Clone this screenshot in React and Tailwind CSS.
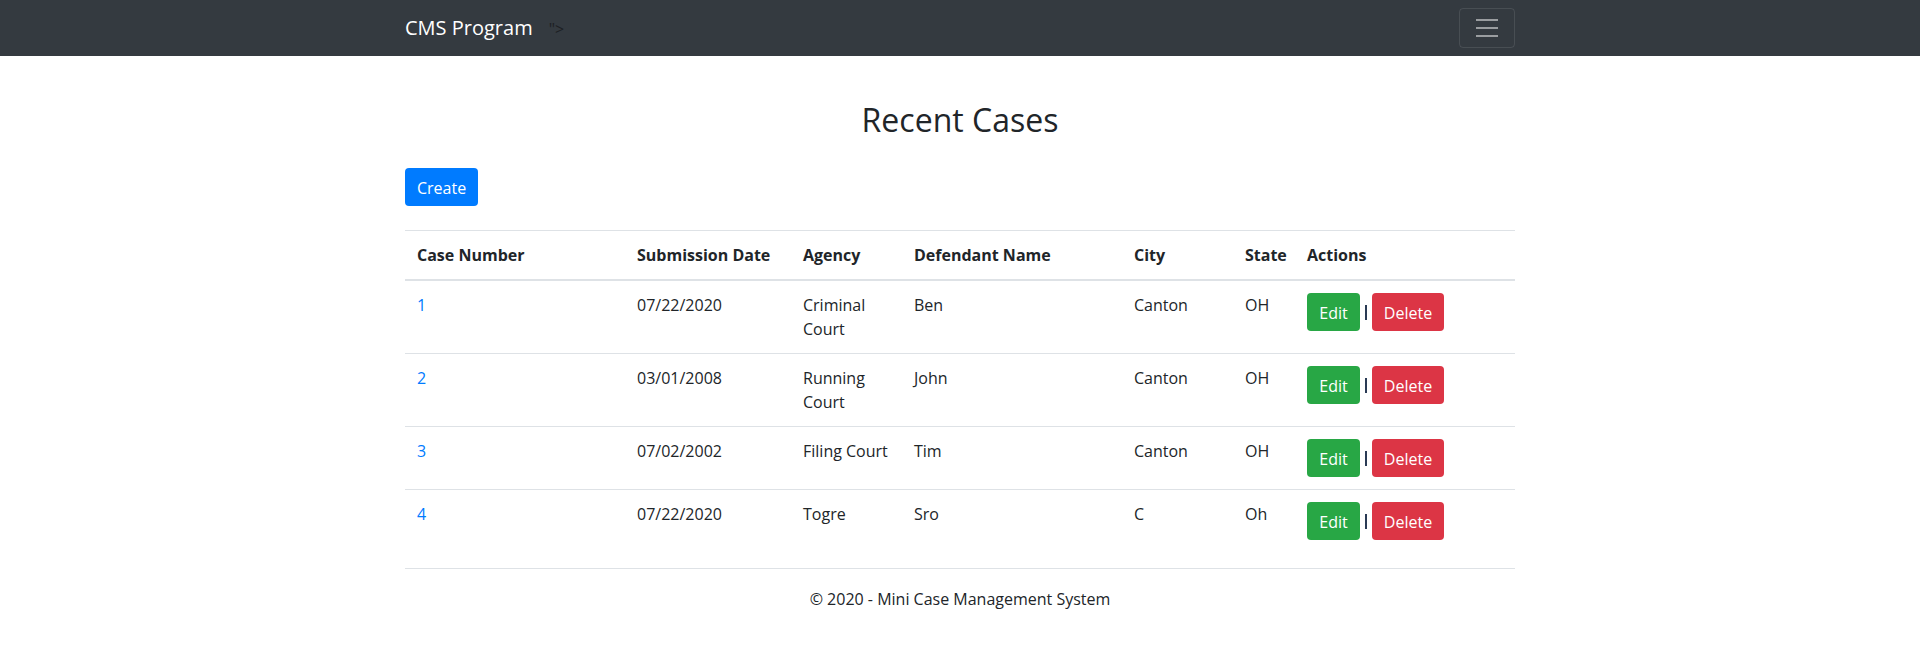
import React from "react";

const rows = [
  { id: "1", date: "07/22/2020", agency: "Criminal Court", name: "Ben", city: "Canton", state: "OH" },
  { id: "2", date: "03/01/2008", agency: "Running Court", name: "John", city: "Canton", state: "OH" },
  { id: "3", date: "07/02/2002", agency: "Filing Court", name: "Tim", city: "Canton", state: "OH", nowrap: true },
  { id: "4", date: "07/22/2020", agency: "Togre", name: "Sro", city: "C", state: "Oh" },
];

export default function App() {
  return (
    <div className="min-h-screen bg-white text-[#212529] text-base leading-6 font-['Open_Sans','Noto_Sans',sans-serif]">
      <nav className="h-14 bg-[#343a40]">
        <div className="mx-auto flex h-full w-[1140px] items-center justify-between px-[15px]">
          <div className="flex items-baseline">
            <a href="#" className="mr-4 text-xl leading-[30px] text-white">CMS Program</a>
            <span className="text-base text-[#1d2024]">"&gt;</span>
          </div>
          <button className="flex h-[40px] w-[56px] items-center justify-center rounded border border-white/10">
            <svg width="30" height="30" viewBox="0 0 30 30">
              <path d="M4 7h22M4 15h22M4 23h22" stroke="rgba(255,255,255,0.5)" strokeWidth="2" strokeLinecap="butt" />
            </svg>
          </button>
        </div>
      </nav>

      <main className="mx-auto w-[1140px] px-[15px]">
        <h2 className="mt-[45px] text-center text-[32px] font-normal leading-[1.2]">Recent Cases</h2>
        <div className="mt-[29px]">
          <a href="#" className="inline-flex h-[38px] items-center rounded bg-[#007bff] px-3 pt-px text-white">Create</a>
        </div>

        <table className="mt-[24px] mb-4 w-full table-fixed border-collapse">
          <colgroup>
            <col className="w-[220px]" />
            <col className="w-[166px]" />
            <col className="w-[111px]" />
            <col className="w-[220px]" />
            <col className="w-[111px]" />
            <col className="w-[62px]" />
            <col className="w-[220px]" />
          </colgroup>
          <thead>
            <tr>
              {["Case Number", "Submission Date", "Agency", "Defendant Name", "City", "State", "Actions"].map((h) => (
                <th key={h} className="border-t border-b-2 border-[#dee2e6] p-3 text-left align-bottom font-bold whitespace-nowrap">
                  {h}
                </th>
              ))}
            </tr>
          </thead>
          <tbody>
            {rows.map((r) => (
              <tr key={r.id}>
                <td className="border-t border-[#dee2e6] p-3 align-top">
                  <a href="#" className="text-[#007bff]">{r.id}</a>
                </td>
                <td className="border-t border-[#dee2e6] p-3 align-top">{r.date}</td>
                <td className={`border-t border-[#dee2e6] p-3 align-top ${r.nowrap ? "whitespace-nowrap" : ""}`}>{r.agency}</td>
                <td className="border-t border-[#dee2e6] p-3 align-top">{r.name}</td>
                <td className="border-t border-[#dee2e6] p-3 align-top">{r.city}</td>
                <td className="border-t border-[#dee2e6] p-3 align-top">{r.state}</td>
                <td className="border-t border-[#dee2e6] p-3 align-top">
                  <div className="flex items-center">
                    <a href="#" className="flex h-[38px] w-[53px] items-center justify-center rounded bg-[#28a745] pt-px text-white">Edit</a>
                    <span className="flex w-[12px] justify-center">
                      <span className="block h-[15px] w-[1.5px] bg-[#2a3b55]" />
                    </span>
                    <a href="#" className="flex h-[38px] w-[72px] items-center justify-center rounded bg-[#dc3545] pt-px text-white">Delete</a>
                  </div>
                </td>
              </tr>
            ))}
          </tbody>
        </table>

        <footer className="border-t border-[#dee2e6] text-center leading-[60px]">
          © 2020 - Mini Case Management System
        </footer>
      </main>
    </div>
  );
}
